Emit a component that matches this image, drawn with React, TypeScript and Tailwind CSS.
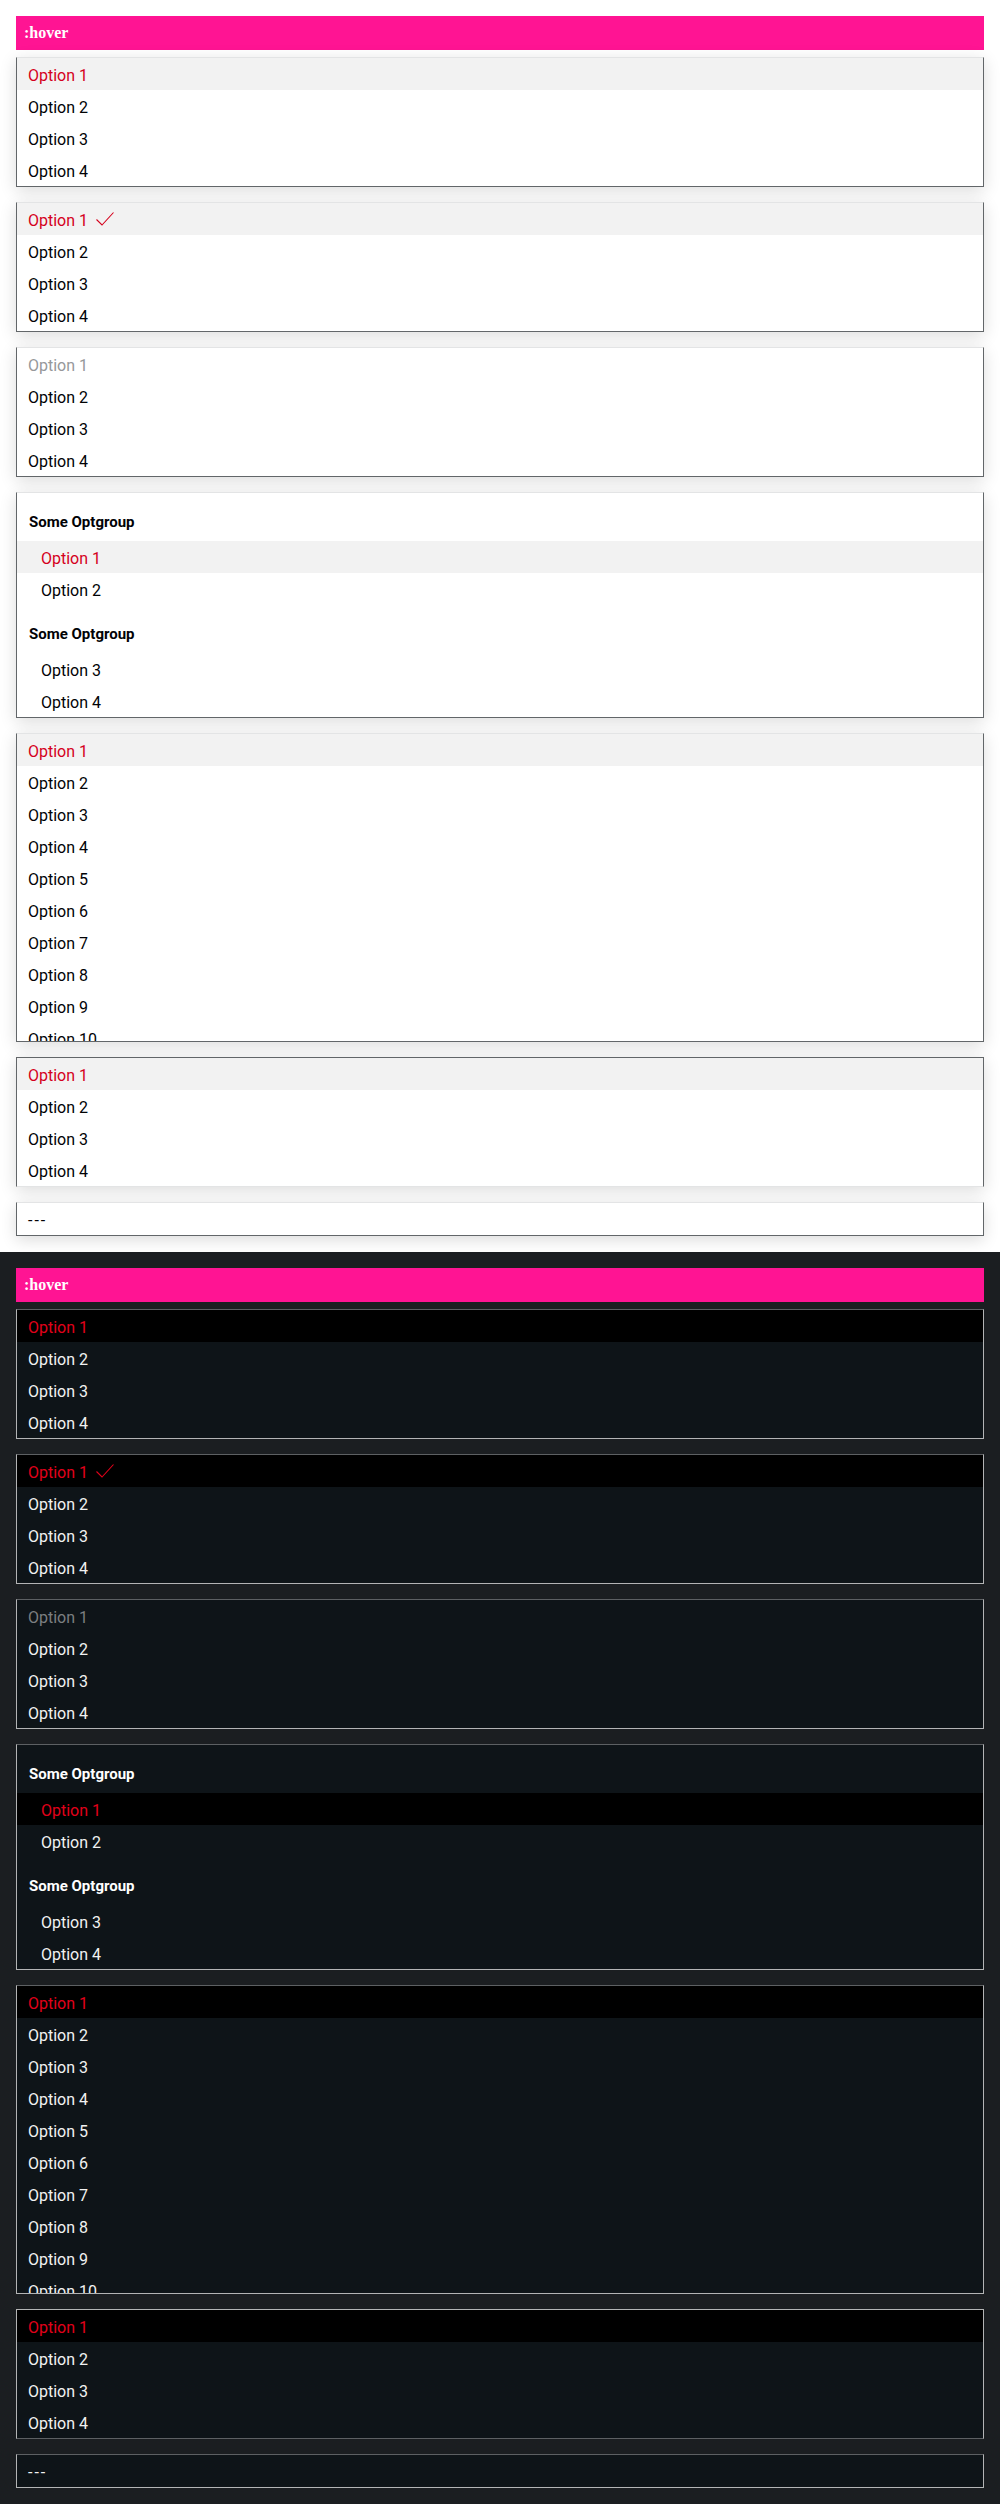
import React from 'react';

interface SectionProps {
  dark?: boolean;
}

interface BoxProps {
  dark?: boolean;
  up?: boolean;
  className?: string;
  children: React.ReactNode;
}

function Box({ dark, up, className = '', children }: BoxProps) {
  const border = dark
    ? up
      ? 'border-[#b3b4b5] border-b-[#5d6063] bg-[#0e1418]'
      : 'border-[#b3b4b5] border-t-[#5d6063] bg-[#0e1418]'
    : up
      ? 'border-[#626669] border-b-[#e3e4e5] bg-white shadow-[0_4px_16px_rgba(0,0,0,0.14)]'
      : 'border-[#626669] border-t-[#e3e4e5] bg-white shadow-[0_4px_16px_rgba(0,0,0,0.14)]';
  return <div className={`border overflow-hidden ${border} ${className}`}>{children}</div>;
}

interface OptionProps {
  label: string;
  dark?: boolean;
  hover?: boolean;
  disabled?: boolean;
  checked?: boolean;
  indent?: boolean;
}

function Option({ label, dark, hover, disabled, checked, indent }: OptionProps) {
  let color = dark ? 'text-[#f2f2f2]' : 'text-[#010205]';
  if (hover) color = dark ? 'text-[#e2001a]' : 'text-[#d5001c]';
  if (disabled) color = dark ? 'text-[#7c7f81]' : 'text-[#96989a]';
  const bg = hover ? (dark ? 'bg-black' : 'bg-[#f2f2f2]') : '';

  return (
    <div className={`h-8 shrink-0 flex items-center pt-[3px] ${indent ? 'pl-6' : 'pl-[11px]'} ${bg} ${color}`}>
      <span>{label}</span>
      {checked && (
        <svg width="20" height="16" viewBox="0 0 20 16" className="ml-[7px] -mt-[4px]" fill="none">
          <path d="M1.5 8.5 L7 14 L18.5 1.5" stroke="currentColor" strokeWidth="1.1" />
        </svg>
      )}
    </div>
  );
}

function GroupLabel({ dark, label }: { dark?: boolean; label: string }) {
  return (
    <div
      className={`h-12 pl-3 pt-[13px] leading-8 font-bold text-[15px] ${dark ? 'text-white' : 'text-[#010205]'}`}
    >
      {label}
    </div>
  );
}

function Section({ dark }: SectionProps) {
  const four = ['Option 2', 'Option 3', 'Option 4'];
  const many = ['Option 2', 'Option 3', 'Option 4', 'Option 5', 'Option 6', 'Option 7', 'Option 8', 'Option 9', 'Option 10'];

  return (
    <div className={`px-4 pt-4 pb-4 ${dark ? 'bg-[#1b1e21]' : 'bg-white'}`}>
      <div className="h-[34px] bg-[#ff1493] px-2 flex items-center text-white font-bold text-base font-['Liberation_Serif',serif]">
        :hover
      </div>

      <div className="mt-[7px] flex flex-col gap-[15px] text-base font-['Roboto',sans-serif]">
        {/* hover */}
        <Box dark={dark}>
          <Option label="Option 1" dark={dark} hover />
          {four.map((o) => (
            <Option key={o} label={o} dark={dark} />
          ))}
        </Box>

        {/* selected */}
        <Box dark={dark}>
          <Option label="Option 1" dark={dark} hover checked />
          {four.map((o) => (
            <Option key={o} label={o} dark={dark} />
          ))}
        </Box>

        {/* disabled */}
        <Box dark={dark}>
          <Option label="Option 1" dark={dark} disabled />
          {four.map((o) => (
            <Option key={o} label={o} dark={dark} />
          ))}
        </Box>

        {/* optgroup */}
        <Box dark={dark}>
          <GroupLabel dark={dark} label="Some Optgroup" />
          <Option label="Option 1" dark={dark} hover indent />
          <Option label="Option 2" dark={dark} indent />
          <GroupLabel dark={dark} label="Some Optgroup" />
          <Option label="Option 3" dark={dark} indent />
          <Option label="Option 4" dark={dark} indent />
        </Box>

        {/* scrolling */}
        <Box dark={dark} className="h-[309px] flex flex-col">
          <Option label="Option 1" dark={dark} hover />
          {many.map((o) => (
            <Option key={o} label={o} dark={dark} />
          ))}
        </Box>

        {/* opens upward */}
        <Box dark={dark} up>
          <Option label="Option 1" dark={dark} hover />
          {four.map((o) => (
            <Option key={o} label={o} dark={dark} />
          ))}
        </Box>

        <Box dark={dark}>
          <div
            className={`h-8 flex items-center pt-[3px] pl-[11px] tracking-[2px] ${dark ? 'text-[#f2f2f2]' : 'text-[#010205]'}`}
          >
            ---
          </div>
        </Box>
      </div>
    </div>
  );
}

export default function App() {
  return (
    <div className="w-[1000px]">
      <Section />
      <Section dark />
    </div>
  );
}
